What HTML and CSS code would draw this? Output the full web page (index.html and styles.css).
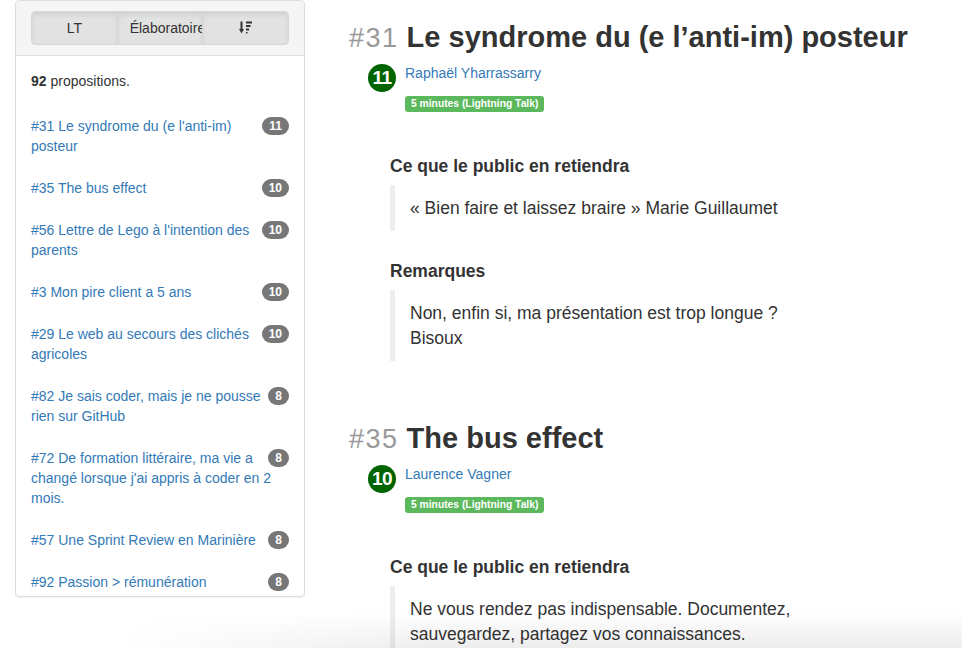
FILE: index.html
```html
<!DOCTYPE html>
<html lang="fr">
<head>
<meta charset="utf-8">
<title>Propositions</title>
<link rel="stylesheet" href="styles.css">
</head>
<body>
<div class="layout">
  <aside class="panel">
    <div class="panel-heading">
      <div class="btn-group">
        <button class="btn">LT</button>
        <button class="btn">Élaboratoire</button>
        <button class="btn">
          <svg class="sort-icon" width="13" height="13" viewBox="0 0 13 13">
            <path d="M2.5 0.5 V9" stroke="#333" stroke-width="2" fill="none"/>
            <path d="M0 8 L5 8 L2.5 12.5 Z" fill="#333"/>
            <rect x="7" y="0.5" width="6" height="2" fill="#333"/>
            <rect x="7" y="4" width="4.5" height="2" fill="#333"/>
            <rect x="7" y="7.5" width="3" height="2" fill="#333"/>
            <rect x="7" y="11" width="1.5" height="1.5" fill="#333"/>
          </svg>
        </button>
      </div>
    </div>
    <div class="panel-body">
      <p class="count"><strong>92</strong> propositions.</p>
      <ul class="list">
        <li class="item"><span class="badge">11</span><a href="#">#31 Le syndrome du (e l'anti-im) posteur</a></li>
        <li class="item"><span class="badge">10</span><a href="#">#35 The bus effect</a></li>
        <li class="item"><span class="badge">10</span><a href="#">#56 Lettre de Lego à l'intention des parents</a></li>
        <li class="item"><span class="badge">10</span><a href="#">#3 Mon pire client a 5 ans</a></li>
        <li class="item"><span class="badge">10</span><a href="#">#29 Le web au secours des clichés agricoles</a></li>
        <li class="item"><span class="badge">8</span><a href="#">#82 Je sais coder, mais je ne pousse rien sur GitHub</a></li>
        <li class="item"><span class="badge">8</span><a href="#">#72 De formation littéraire, ma vie a changé lorsque j'ai appris à coder en 2 mois.</a></li>
        <li class="item"><span class="badge">8</span><a href="#">#57 Une Sprint Review en Marinière</a></li>
        <li class="item"><span class="badge">8</span><a href="#">#92 Passion &gt; rémunération</a></li>
      </ul>
    </div>
  </aside>

  <main class="main">
    <article class="talk">
      <h1 class="talk-title"><span class="num">#31</span> Le syndrome du (e l’anti-im) posteur</h1>
      <div class="speaker">
        <div class="avatar">11</div>
        <div class="speaker-info">
          <a class="speaker-name" href="#">Raphaël Yharrassarry</a>
          <span class="label">5 minutes (Lightning Talk)</span>
        </div>
      </div>
      <div class="details">
        <h4>Ce que le public en retiendra</h4>
        <blockquote>« Bien faire et laissez braire » Marie Guillaumet</blockquote>
        <h4>Remarques</h4>
        <blockquote>Non, enfin si, ma présentation est trop longue ?<br>Bisoux</blockquote>
      </div>
    </article>

    <article class="talk">
      <h1 class="talk-title"><span class="num">#35</span> The bus effect</h1>
      <div class="speaker">
        <div class="avatar">10</div>
        <div class="speaker-info">
          <a class="speaker-name" href="#">Laurence Vagner</a>
          <span class="label">5 minutes (Lightning Talk)</span>
        </div>
      </div>
      <div class="details">
        <h4>Ce que le public en retiendra</h4>
        <blockquote>Ne vous rendez pas indispensable. Documentez,<br>sauvegardez, partagez vos connaissances.</blockquote>
      </div>
    </article>
  </main>
</div>
<div class="window-shadow"></div>
</body>
</html>
```

FILE: styles.css
```css
* { box-sizing: border-box; }

html, body {
  margin: 0;
  padding: 0;
  background: #fff;
  height: 100%;
  overflow: hidden;
}

body {
  font-family: "Liberation Sans", Arial, Helvetica, sans-serif;
  font-size: 14px;
  line-height: 20px;
  color: #333;
}

a { color: #337ab7; text-decoration: none; }

.layout {
  display: flex;
  align-items: flex-start;
  gap: 44px;
  padding-left: 15px;
}

/* Sidebar panel */
.panel {
  flex: 0 0 290px;
  width: 290px;
  border: 1px solid #ddd;
  border-radius: 4px;
  background: #fff;
  box-shadow: 0 1px 1px rgba(0,0,0,0.05);
  overflow: hidden;
}

.panel-heading {
  background: #f5f5f5;
  border-bottom: 1px solid #ddd;
  padding: 10px 15px;
}

.btn-group {
  display: flex;
}

.btn {
  flex: 1 1 0;
  min-width: 0;
  height: 34px;
  padding: 6px 12px;
  margin: 0 0 0 -1px;
  font-family: "Liberation Sans", Arial, sans-serif;
  font-size: 14px;
  line-height: 20px;
  color: #333;
  background: #e2e2e2;
  border: 1px solid #d6d6d6;
  box-shadow: inset 0 3px 5px rgba(0,0,0,0.07);
  white-space: nowrap;
  overflow: hidden;
  text-align: center;
}
.btn:first-child { margin-left: 0; border-radius: 4px 0 0 4px; }
.btn:last-child { border-radius: 0 4px 4px 0; }

.sort-icon { display: inline-block; vertical-align: -1px; }

.panel-body {
  height: 540px;
  overflow: hidden;
  padding: 15px;
}

.count {
  margin: 0 0 14px;
}

.list {
  list-style: none;
  margin: 0;
  padding: 0;
}

.item {
  padding: 11px 0;
}

.badge {
  float: right;
  margin-left: 5px;
  margin-top: 1px;
  min-width: 10px;
  padding: 3px 7px;
  font-size: 12px;
  font-weight: bold;
  line-height: 12px;
  color: #fff;
  background: #777;
  border-radius: 10px;
  text-align: center;
}

/* Main */
.main {
  flex: 1 1 auto;
  min-width: 0;
}

.talk {
  padding-bottom: 40px;
}

.talk-title {
  margin: 20px 0 0;
  font-size: 29px;
  line-height: 35px;
  font-weight: bold;
  color: #333;
  white-space: nowrap;
}

.talk-title .num {
  font-size: 27px;
  font-weight: normal;
  letter-spacing: 1.5px;
  color: #999;
}

.speaker {
  display: flex;
  align-items: flex-start;
  margin: 8px 0 0 19px;
}

.avatar {
  flex: 0 0 28px;
  width: 28px;
  height: 28px;
  border-radius: 50%;
  background: #006400;
  color: #fff;
  font-weight: bold;
  font-size: 19px;
  line-height: 28px;
  text-align: center;
  letter-spacing: -0.5px;
}

.speaker-info {
  display: flex;
  flex-direction: column;
  align-items: flex-start;
  margin-left: 9px;
}

.speaker-name {
  font-size: 14px;
  line-height: 18px;
}

.label {
  margin-top: 14px;
  display: inline-block;
  padding: 2px 6px 3px;
  font-size: 10.3px;
  line-height: 11px;
  font-weight: bold;
  color: #fff;
  background: #5cb85c;
  border-radius: 3px;
  white-space: nowrap;
}

.details {
  margin: 44px 0 0 41px;
}

.details h4 {
  margin: 0 0 9px;
  font-size: 17.5px;
  line-height: 20px;
  font-weight: bold;
  color: #333;
}

.details blockquote {
  margin: 0 0 30px;
  padding: 11px 15px 10px;
  border-left: 5px solid #eee;
  font-size: 17.5px;
  line-height: 25px;
}

.details blockquote:last-child { margin-bottom: 0; }

.window-shadow {
  position: fixed;
  left: 0;
  right: 0;
  bottom: 0;
  height: 36px;
  pointer-events: none;
  background: linear-gradient(to bottom, rgba(0,0,0,0), rgba(0,0,0,0.07));
  -webkit-mask-image: linear-gradient(to right, transparent 12%, #000 45%);
  mask-image: linear-gradient(to right, transparent 12%, #000 45%);
}
```
